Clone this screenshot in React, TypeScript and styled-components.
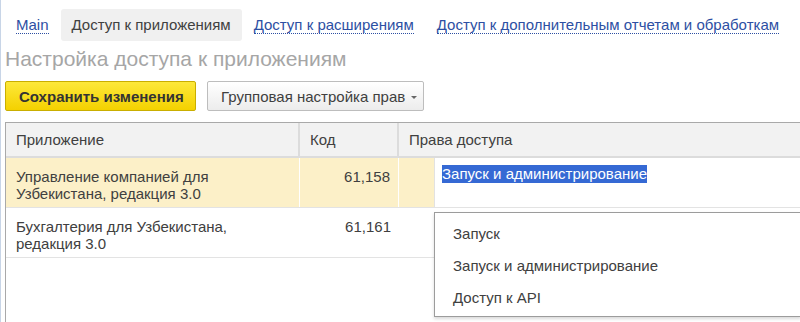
import React from "react";
import styled, { createGlobalStyle } from "styled-components";

const Global = createGlobalStyle`
  html, body { margin: 0; padding: 0; background: #fff; }
  body { font-family: "Liberation Sans", Arial, sans-serif; color: #333; overflow: hidden; }
  #root { width: 800px; height: 322px; overflow: hidden; }
`;

const Page = styled.div`
  position: relative;
  width: 800px;
  height: 322px;
  border-left: 1px solid #c8d5e7;
  box-sizing: border-box;
  padding: 9px 0 0 4px;
  overflow: hidden;
`;

const Tabs = styled.div`
  display: flex;
  gap: 1px;
  height: 32px;
`;

const Tab = styled.div<{ $active?: boolean }>`
  display: flex;
  align-items: center;
  padding: 0 11px;
  border-radius: 3px;
  font-size: 15px;
  background: ${(p) => (p.$active ? "#f0f0f0" : "transparent")};
  color: ${(p) => (p.$active ? "#404040" : "#2d4fa3")};
  span {
    border-bottom: ${(p) => (p.$active ? "none" : "1px dotted #2d4fa3")};
    line-height: 16px;
  }
`;

const Title = styled.div`
  margin-top: 5px;
  font-size: 21px;
  color: #a6a6a6;
  line-height: 25px;
`;

const Toolbar = styled.div`
  display: flex;
  gap: 11px;
  margin-top: 10px;
`;

const SaveButton = styled.div`
  box-sizing: border-box;
  height: 30px;
  width: 191px;
  display: flex;
  align-items: center;
  padding-left: 13px;
  background: linear-gradient(#fde83a, #f4d100);
  border: 1px solid #c9ae00;
  border-radius: 2px;
  font-weight: bold;
  font-size: 15px;
  color: #333;
`;

const GroupButton = styled.div`
  box-sizing: border-box;
  height: 30px;
  width: 217px;
  display: flex;
  align-items: center;
  padding-left: 13px;
  gap: 6px;
  background: linear-gradient(#ffffff, #ececec);
  border: 1px solid #bdbdbd;
  border-radius: 2px;
  font-size: 15px;
  color: #404040;
`;

const Caret = styled.span`
  width: 0;
  height: 0;
  border-left: 3px solid transparent;
  border-right: 3px solid transparent;
  border-top: 3px solid #666;
  margin-top: 2px;
`;

const Table = styled.div`
  margin-top: 11px;
  width: 900px;
  border-top: 1px solid #a9a9a9;
  border-left: 1px solid #a9a9a9;
  height: 200px;
`;

const Row = styled.div<{ $selected?: boolean; $header?: boolean }>`
  display: grid;
  grid-template-columns: 294px 99px 1fr;
  height: ${(p) => (p.$header ? "33px" : "49px")};
  background: ${(p) => (p.$header ? "#f2f2f2" : p.$selected ? "#fcf0c8" : "#fff")};
  border-bottom: ${(p) => (p.$header ? "2px solid #dcdcdc" : "1px solid #e3e3e3")};
`;

const Cell = styled.div<{ $right?: boolean; $header?: boolean; $sep?: boolean }>`
  box-sizing: border-box;
  padding: ${(p) => (p.$header ? "0 10px" : "10px 10px 0 10px")};
  font-size: 15px;
  line-height: 17px;
  color: #404040;
  display: flex;
  align-items: ${(p) => (p.$header ? "center" : "flex-start")};
  justify-content: ${(p) => (p.$right ? "flex-end" : "flex-start")};
  border-right: ${(p) => (p.$sep ? (p.$header ? "2px solid #dcdcdc" : "1px solid #fff") : "none")};
  ${(p) => p.$right && "padding-right: 8px;"}
`;

const RightsCell = styled.div`
  display: flex;
`;

const Pad = styled.div`
  width: 35px;
`;

const Editor = styled.div`
  flex: 1;
  background: #fff;
  border-left: 1px solid #e2e2e2;
  padding: 7px 0 0 7px;
`;

const Selected = styled.span`
  background: #3569d4;
  color: #fff;
  font-size: 15px;
  line-height: 18px;
  display: inline-block;
`;

const Dropdown = styled.div`
  position: absolute;
  left: 433px;
  top: 212px;
  width: 367px;
  height: 105px;
  box-sizing: border-box;
  border: 1px solid #9c9c9c;
  background: #fff;
  box-shadow: 0 2px 3px rgba(0, 0, 0, 0.15);
  padding-top: 4px;
`;

const Item = styled.div`
  height: 32px;
  display: flex;
  align-items: center;
  padding-left: 18px;
  font-size: 15px;
  color: #404040;
`;

export default function App() {
  return (
    <>
      <Global />
      <Page>
        <Tabs>
          <Tab><span>Main</span></Tab>
          <Tab $active><span>Доступ к приложениям</span></Tab>
          <Tab><span>Доступ к расширениям</span></Tab>
          <Tab><span>Доступ к дополнительным отчетам и обработкам</span></Tab>
        </Tabs>
        <Title>Настройка доступа к приложениям</Title>
        <Toolbar>
          <SaveButton>Сохранить изменения</SaveButton>
          <GroupButton>
            Групповая настройка прав <Caret />
          </GroupButton>
        </Toolbar>
        <Table>
          <Row $header>
            <Cell $header $sep>Приложение</Cell>
            <Cell $header $sep>Код</Cell>
            <Cell $header>Права доступа</Cell>
          </Row>
          <Row $selected>
            <Cell $sep>Управление компанией для<br />Узбекистана, редакция 3.0</Cell>
            <Cell $sep $right>61,158</Cell>
            <RightsCell>
              <Pad />
              <Editor>
                <Selected>Запуск и администрирование</Selected>
              </Editor>
            </RightsCell>
          </Row>
          <Row>
            <Cell>Бухгалтерия для Узбекистана,<br />редакция 3.0</Cell>
            <Cell $right>61,161</Cell>
            <Cell />
          </Row>
        </Table>
        <Dropdown>
          <Item>Запуск</Item>
          <Item>Запуск и администрирование</Item>
          <Item>Доступ к API</Item>
        </Dropdown>
      </Page>
    </>
  );
}
